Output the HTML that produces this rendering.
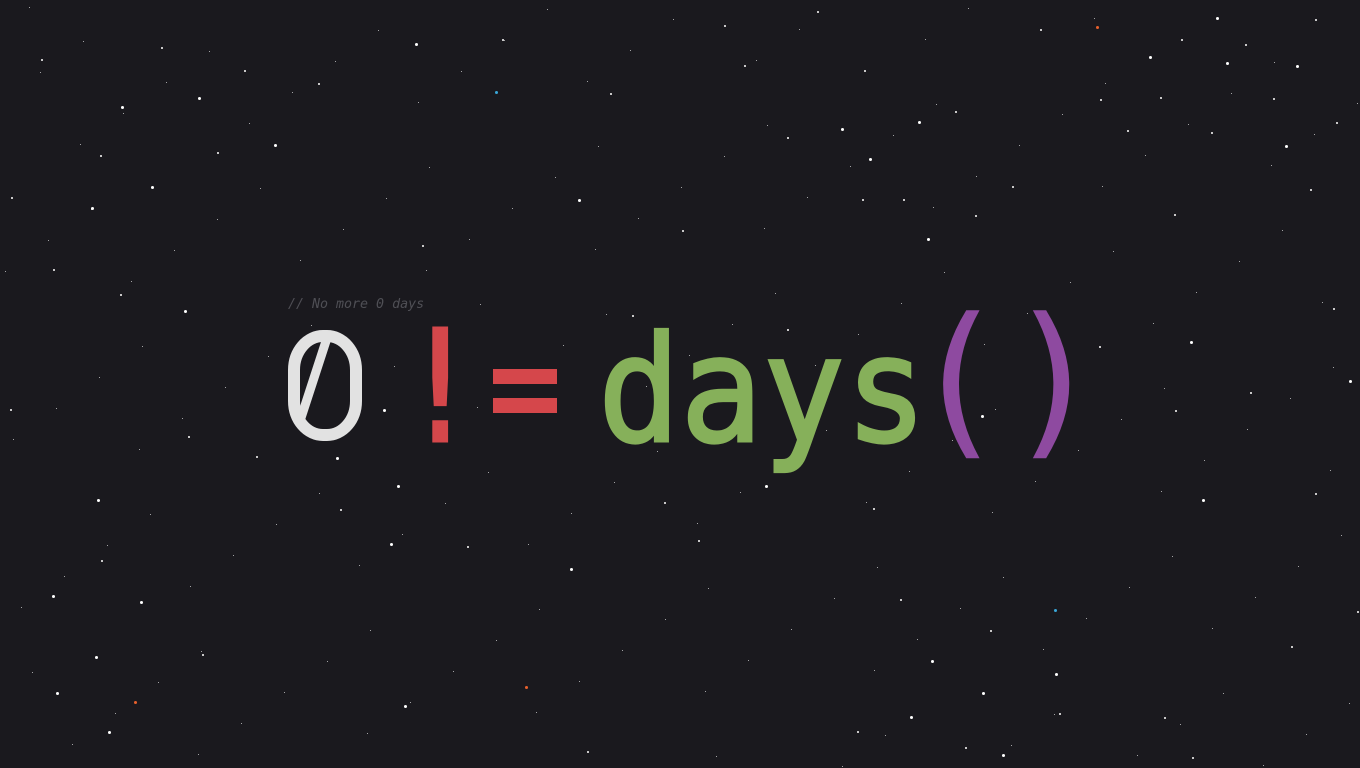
<!DOCTYPE html>
<html><head><meta charset="utf-8"><style>
html,body{margin:0;padding:0;width:1360px;height:768px;overflow:hidden;background:#1a191e}
.s{position:absolute;border-radius:50%;background:#fff}
.c{position:absolute;font-family:"DejaVu Sans Mono","Liberation Mono",monospace;font-size:155px;line-height:1;top:310px;white-space:pre;transform-origin:0 0;-webkit-text-stroke:3px currentColor}
#cm{position:absolute;left:288px;top:297px;font-family:"DejaVu Sans Mono","Liberation Mono",monospace;font-style:italic;font-size:13.3px;color:#4f4f55;white-space:pre}
</style></head><body>
<div id="stars"></div>
<div id="cm">// No more 0 days</div>
<svg style="position:absolute;left:0;top:0" width="1360" height="768">
<rect x="294" y="336" width="62" height="99" rx="29" ry="34" fill="none" stroke="#e2e2e2" stroke-width="12"/>
<line x1="327" y1="338" x2="299" y2="424" stroke="#e2e2e2" stroke-width="9"/>
</svg>
<div class="c" style="left:400px;color:#d5474b;transform:scaleX(0.86)">!</div>
<div style="position:absolute;left:493px;top:369px;width:64px;height:15px;background:#d5474b"></div>
<div style="position:absolute;left:493px;top:398px;width:64px;height:15px;background:#d5474b"></div>
<div class="c" style="left:598px;top:317px;font-size:147px;color:#86b05a;transform:scaleX(0.93)">days</div>
<div class="c" style="left:911px;top:297px;font-size:165px;color:#8e4aa0;transform:scaleX(0.95);-webkit-text-stroke:1px #8e4aa0">(</div>
<div class="c" style="left:1007px;top:297px;font-size:165px;color:#8e4aa0;transform:scaleX(0.95);-webkit-text-stroke:1px #8e4aa0">)</div>
<script>
var p=[[42,60,2],[122,107,3],[199,98,3],[275,145,3],[152,187,3],[92,208,3],[416,44,3],[579,200,3],[842,129,3],[870,159,3],[919,122,3],[863,200,2],[928,239,3],[1150,57,3],[1217,18,3],[1227,63,3],[1297,66,3],[1286,146,3],[1191,342,3],[1350,381,3],[1203,500,3],[185,311,3],[98,500,3],[337,458,3],[398,486,3],[384,410,3],[766,486,3],[982,416,3],[391,544,3],[571,569,3],[53,596,3],[141,602,3],[96,657,3],[57,693,3],[109,732,3],[405,706,3],[932,661,3],[983,693,3],[911,717,3],[1056,674,3],[1003,755,3],[162,48,2],[101,156,2],[218,153,2],[245,71,2],[319,84,2],[423,246,2],[503,40,2],[683,231,2],[745,66,2],[788,138,2],[818,12,2],[865,71,2],[976,216,2],[1041,30,2],[1101,100,2],[1175,215,2],[1311,190,2],[1337,123,2],[1246,45,2],[1274,99,2],[1316,20,2],[1334,309,2],[1251,393,2],[1316,494,2],[1358,612,2],[1292,647,2],[1165,718,2],[1193,758,2],[966,748,2],[858,732,2],[874,509,2],[665,503,2],[699,541,2],[468,547,2],[341,510,2],[257,457,2],[189,437,2],[11,410,2],[12,198,2],[54,270,2],[121,295,2],[102,561,2],[203,655,2],[588,752,2],[1100,347,2],[1176,411,2],[901,600,2],[991,631,2],[1060,714,2],[1212,133,2],[1161,98,2],[1182,40,2],[1128,131,2],[1013,187,2],[725,26,2],[611,94,2],[633,316,2],[788,330,2],[904,200,2],[956,112,2]];
var h='';
p.forEach(function(a){h+='<div class="s" style="left:'+(a[0]-a[2]/2)+'px;top:'+(a[1]-a[2]/2)+'px;width:'+a[2]+'px;height:'+a[2]+'px"></div>'});
for(var i=0;i<180;i++){var x=(i*397+83)%1360,y=(i*263+41)%768;h+='<div class="s" style="left:'+x+'px;top:'+y+'px;width:1px;height:1px;opacity:.8"></div>'}
[[1096,26,'#e8602c'],[495,91,'#3aa7d8'],[134,701,'#e8602c'],[525,686,'#e8602c'],[1054,609,'#3aa7d8']].forEach(function(a){h+='<div class="s" style="left:'+a[0]+'px;top:'+a[1]+'px;width:3px;height:3px;background:'+a[2]+'"></div>'});
document.getElementById('stars').innerHTML=h;
</script>
</body></html>
